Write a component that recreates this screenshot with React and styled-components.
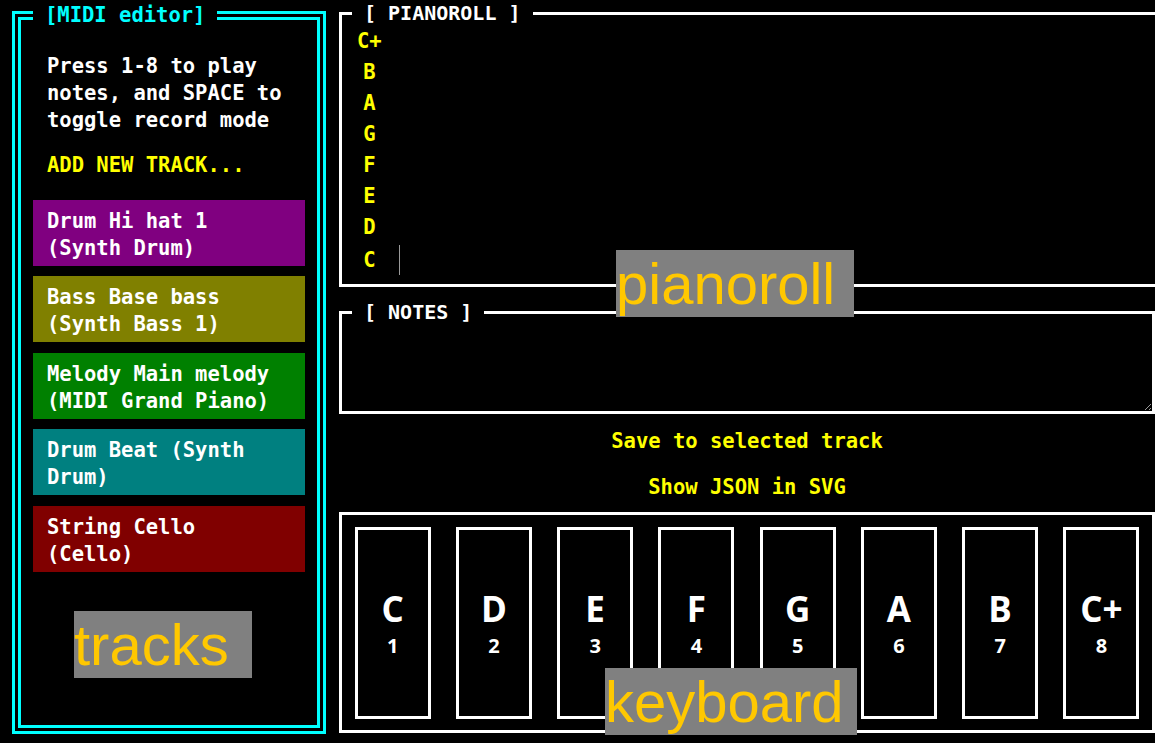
import React from "react";
import styled, { createGlobalStyle } from "styled-components";

const Global = createGlobalStyle`
  html, body {
    margin: 0;
    padding: 0;
    background: #000;
    overflow: hidden;
  }
  body {
    font-family: "DejaVu Sans Mono", "Liberation Mono", monospace;
    color: #fff;
  }
`;

const mono = `"DejaVu Sans Mono", "Liberation Mono", monospace`;

const Page = styled.div`
  position: relative;
  display: flex;
  align-items: flex-start;
  padding-left: 12px;
  width: 1155px;
  height: 743px;
  box-sizing: border-box;
`;

const TracksPanel = styled.fieldset`
  box-sizing: border-box;
  margin: 2px 0 0 0;
  width: 314px;
  height: 732px;
  border: 9px double #00ffff;
  padding: 0 12px 0 12px;
  min-width: 0;
`;

const Legend = styled.legend`
  font-family: ${mono};
  font-weight: bold;
  font-size: ${(p) => p.$size || "20.5px"};
  line-height: 27px;
  color: ${(p) => p.$color || "#fff"};
  padding: 0 12px;
  margin-left: ${(p) => p.$offset || "0px"};
  white-space: pre;
`;

const Help = styled.p`
  margin: 24px 0 0 0;
  padding: 0 16px 0 14px;
  font-family: ${mono};
  font-weight: bold;
  font-size: 20.5px;
  line-height: 27px;
  color: #fff;
`;

const AddTrack = styled.div`
  margin-top: 18px;
  padding: 0 14px;
  font-family: ${mono};
  font-weight: bold;
  font-size: 20.5px;
  line-height: 27px;
  color: #ffff00;
  cursor: pointer;
`;

const TrackList = styled.div`
  display: flex;
  flex-direction: column;
  gap: 10.5px;
  margin-top: 20.5px;
`;

const Track = styled.div`
  background: ${(p) => p.$bg};
  padding: 8px 15px 4px 14px;
  font-family: ${mono};
  font-weight: bold;
  font-size: 20.5px;
  line-height: 27px;
  color: #fff;
`;

const RightCol = styled.div`
  display: flex;
  flex-direction: column;
  width: 816px;
  margin-left: 13px;
  flex-shrink: 0;
`;

const Pianoroll = styled.fieldset`
  box-sizing: border-box;
  margin: 0 -14px 0 0;
  height: 287px;
  border: 3px solid #fff;
  padding: 0 10px;
  min-width: 0;
`;

const RollBody = styled.div`
  display: flex;
  flex-direction: column;
  gap: 4px;
  padding: 1px 0 0 5px;
`;

const RollRow = styled.div`
  display: flex;
  align-items: center;
`;

const NoteLabel = styled.span`
  display: inline-block;
  width: 2ch;
  text-align: center;
  font-family: ${mono};
  font-weight: bold;
  font-size: 20.5px;
  line-height: 27px;
  color: #ffff00;
`;

const Playhead = styled.span`
  display: inline-block;
  width: 1px;
  height: 30px;
  margin-left: 17px;
  background: #9a9a9a;
`;

const Notes = styled.fieldset`
  box-sizing: border-box;
  margin: 11.5px 0 0 0;
  height: 115.5px;
  border: 3px solid #fff;
  padding: 0;
  min-width: 0;
`;

const NotesArea = styled.textarea`
  display: block;
  box-sizing: border-box;
  width: 100%;
  height: 85px;
  margin: 0;
  border: none;
  outline: none;
  background: #000;
  color: #fff;
  font-family: ${mono};
  font-size: 16px;
`;

const ActionButton = styled.button`
  align-self: center;
  margin-top: ${(p) => p.$top};
  padding: 0;
  border: none;
  background: none;
  font-family: ${mono};
  font-weight: bold;
  font-size: 20.5px;
  line-height: 27px;
  color: #ffff00;
  cursor: pointer;
`;

const Keyboard = styled.div`
  box-sizing: border-box;
  margin-top: 11.5px;
  height: 221px;
  border: 3px solid #fff;
  display: flex;
  align-items: center;
  justify-content: space-around;
`;

const Key = styled.div`
  box-sizing: border-box;
  width: 76px;
  height: 192px;
  border: 3px solid #fff;
  background: #000;
  display: flex;
  flex-direction: column;
  align-items: center;
  justify-content: center;
  font-family: "Open Sans", "Noto Sans", sans-serif;
  font-weight: 700;
  color: #fff;
`;

const KeyNote = styled.span`
  font-size: 35px;
  line-height: 44px;
  margin-top: 3px;
`;

const KeyNum = styled.span`
  font-size: 20px;
  line-height: 30px;
`;

const Tag = styled.div`
  position: absolute;
  left: ${(p) => p.$x}px;
  top: ${(p) => p.$y}px;
  background: #808080;
  color: #ffc800;
  font-family: "Liberation Sans", Arial, sans-serif;
  font-size: 58px;
  line-height: 67px;
  padding-right: ${(p) => p.$pad || 17}px;
  white-space: nowrap;
  pointer-events: none;
`;

const tracks = [
  { name: "Drum Hi hat 1 (Synth Drum)", bg: "#800080" },
  { name: "Bass Base bass (Synth Bass 1)", bg: "#808000" },
  { name: "Melody Main melody (MIDI Grand Piano)", bg: "#008000" },
  { name: "Drum Beat (Synth Drum)", bg: "#008080" },
  { name: "String Cello (Cello)", bg: "#800000" },
];

const rollNotes = ["C+", "B", "A", "G", "F", "E", "D", "C"];
const keys = [
  ["C", 1],
  ["D", 2],
  ["E", 3],
  ["F", 4],
  ["G", 5],
  ["A", 6],
  ["B", 7],
  ["C+", 8],
];

export default function App() {
  return (
    <>
      <Global />
      <Page>
        <TracksPanel>
          <Legend $color="#00ffff">[MIDI editor]</Legend>
          <Help>Press 1-8 to play notes, and SPACE to toggle record mode</Help>
          <AddTrack>ADD NEW TRACK...</AddTrack>
          <TrackList>
            {tracks.map((t) => (
              <Track key={t.name} $bg={t.bg}>
                {t.name}
              </Track>
            ))}
          </TrackList>
        </TracksPanel>

        <RightCol>
          <Pianoroll>
            <Legend $size="20px">[ PIANOROLL ]</Legend>
            <RollBody>
              {rollNotes.map((n, i) => (
                <RollRow key={n}>
                  <NoteLabel>{n}</NoteLabel>
                  {i === rollNotes.length - 1 && <Playhead />}
                </RollRow>
              ))}
            </RollBody>
          </Pianoroll>

          <Notes>
            <Legend $size="20px" $offset="10px">[ NOTES ]</Legend>
            <NotesArea spellCheck={false} />
          </Notes>

          <ActionButton $top="13.5px">Save to selected track</ActionButton>
          <ActionButton $top="19px">Show JSON in SVG</ActionButton>

          <Keyboard>
            {keys.map(([n, k]) => (
              <Key key={k}>
                <KeyNote>{n}</KeyNote>
                <KeyNum>{k}</KeyNum>
              </Key>
            ))}
          </Keyboard>
        </RightCol>

        <Tag $x={616} $y={250} $pad={19}>pianoroll</Tag>
        <Tag $x={74} $y={611} $pad={23}>tracks</Tag>
        <Tag $x={605} $y={668} $pad={13}>keyboard</Tag>
      </Page>
    </>
  );
}
